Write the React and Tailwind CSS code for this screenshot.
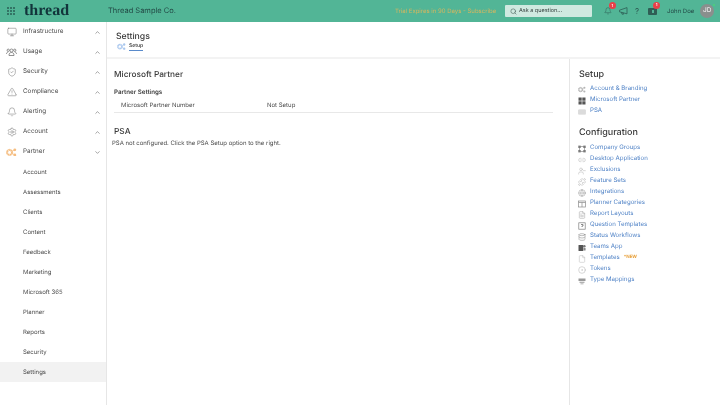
import React from "react";
import { Monitor, ShieldCheck, TriangleAlert, Bell, Settings, ChevronUp, ChevronDown, Search, Link2, UserMinus, Puzzle, Globe, FileText, File, Database, CircleDot } from "lucide-react";

function Cogs({ size = 10, className = "" }) {
  return (
    <svg width={size} height={size * 0.8} viewBox="0 0 20 16" className={className} fill="currentColor">
      <circle cx="6.5" cy="8" r="4.2" fill="none" stroke="currentColor" strokeWidth="3.2" strokeDasharray="2.4 0.8" />
      <circle cx="6.5" cy="8" r="5.6" fill="none" stroke="currentColor" strokeWidth="1.2" />
      <circle cx="16" cy="3.4" r="2.6" />
      <circle cx="16" cy="12.6" r="2.6" />
      <path d="M10 6.5 16 3.4M10 9.5l6 3.2" stroke="currentColor" strokeWidth="1.3" />
    </svg>
  );
}
function UsageIcon({ className = "" }) {
  return (
    <svg width="11" height="10" viewBox="0 0 22 20" fill="none" stroke="currentColor" strokeWidth="1.5" className={className}>
      <circle cx="11" cy="7" r="3" />
      <path d="M6 16c0-3 2-5 5-5s5 2 5 5v1H6z" />
      <circle cx="4.5" cy="6.5" r="2.3" />
      <circle cx="17.5" cy="6.5" r="2.3" />
      <path d="M1 14c0-2.400 1.500-4 3.500-4M21 14c0-2.400-1.500-4-3.500-4" />
    </svg>
  );
}
const Win = ({ className = "" }) => (
  <svg width="8" height="8" viewBox="0 0 8 8" fill="currentColor" className={className}>
    <rect x="0.500" y="0.500" width="3.200" height="3.200" />
    <rect x="4.300" y="0.500" width="3.200" height="3.200" />
    <rect x="0.500" y="4.300" width="3.200" height="3.200" />
    <rect x="4.300" y="4.300" width="3.200" height="3.200" />
  </svg>
);
const Card = ({ className = "" }) => (
  <svg width="8" height="8" viewBox="0 0 8 8" fill="currentColor" className={className}>
    <rect x="0.300" y="1.500" width="7.400" height="5" rx="0.500" opacity="0.55" />
    <path d="M1 3h6M1 5h6" stroke="#fff" strokeWidth="0.500" />
  </svg>
);
const Groups = ({ className = "" }) => (
  <svg width="8" height="8" viewBox="0 0 8 8" fill="none" stroke="currentColor" strokeWidth="0.600" className={className}>
    <rect x="1.400" y="1.400" width="5.200" height="5.200" />
    <g fill="currentColor" stroke="none">
      <rect x="0.300" y="0.600" width="2.400" height="2.400" />
      <rect x="5.300" y="0.600" width="2.400" height="2.400" />
      <rect x="0.300" y="5" width="2.400" height="2.400" />
      <rect x="5.300" y="5" width="2.400" height="2.400" />
    </g>
  </svg>
);
const Planner = ({ className = "" }) => (
  <svg width="8" height="8" viewBox="0 0 8 8" fill="none" stroke="currentColor" strokeWidth="0.700" className={className}>
    <rect x="0.600" y="1" width="6.800" height="6" />
    <path d="M0.600 2.500h6.800M4 2.500V7" />
  </svg>
);
const Question = ({ className = "" }) => (
  <svg width="8" height="8" viewBox="0 0 8 8" fill="none" stroke="currentColor" strokeWidth="0.700" className={className}>
    <rect x="0.800" y="0.800" width="6.400" height="6.400" />
    <path d="M3 2.500h2v1.500H4v1" strokeWidth="0.900" />
  </svg>
);
const Teams = ({ className = "" }) => (
  <svg width="8" height="8" viewBox="0 0 8 8" fill="currentColor" className={className}>
    <rect x="0.500" y="1" width="4.800" height="6" rx="0.500" />
    <circle cx="6.400" cy="2.300" r="1.200" opacity="0.800" />
    <rect x="5.600" y="4" width="2" height="2.600" rx="0.600" opacity="0.700" />
  </svg>
);
const Stack = ({ className = "" }) => (
  <svg width="8" height="8" viewBox="0 0 8 8" fill="currentColor" className={className}>
    <path d="M0.500 1.500h7v2.500h-7zM1.500 4.800h5v1h-5zM2.500 6.400h3v0.900h-3z" />
  </svg>
);

const nav = [
  ["Infrastructure", Monitor],
  ["Usage", UsageIcon],
  ["Security", ShieldCheck],
  ["Compliance", TriangleAlert],
  ["Alerting", Bell],
  ["Account", Settings],
];
const subs = ["Account", "Assessments", "Clients", "Content", "Feedback", "Marketing", "Microsoft 365", "Planner", "Reports", "Security", "Settings"];
const S = (I) => (p) => <I size={8} strokeWidth={1.5} {...p} />;
const setup = [
  ["Account & Branding", (p) => <Cogs size={9} {...p} />, "text-[#b5b5b5]"],
  ["Microsoft Partner", Win, "text-[#555555]"],
  ["PSA", Card, "text-[#a8a8a8]"],
];
const config = [
  ["Company Groups", Groups, "text-[#7a7a7a]"],
  ["Desktop Application", S(Link2), "text-[#b0b0b0]"],
  ["Exclusions", S(UserMinus), "text-[#b0b0b0]"],
  ["Feature Sets", S(Puzzle), "text-[#a8a8a8]"],
  ["Integrations", S(Globe), "text-[#999999]"],
  ["Planner Categories", Planner, "text-[#8a8a8a]"],
  ["Report Layouts", S(FileText), "text-[#a0a0a0]"],
  ["Question Templates", Question, "text-[#7f7f7f]"],
  ["Status Workflows", S(Database), "text-[#808080]"],
  ["Teams App", Teams, "text-[#555555]"],
  ["Templates", S(File), "text-[#b8b8b8]"],
  ["Tokens", S(CircleDot), "text-[#b0b0b0]"],
  ["Type Mappings", Stack, "text-[#999999]"],
];

function LinkRow({ label, Icon, color, extra }) {
  return (
    <div className="flex h-[11px] items-center">
      <span className={`ml-[8px] mr-[4px] flex w-[8px] shrink-0 justify-center ${color}`}><Icon /></span>
      <span className="text-[6.1px] leading-none text-[#4f82c6]">{label}</span>
      {extra}
    </div>
  );
}

function Badge({ className }) {
  return <span className={`absolute flex h-[7px] w-[7px] items-center justify-center rounded-full bg-[#ea3f48] text-[4px] font-semibold leading-none text-white ${className}`}>1</span>;
}

export default function App() {
  return (
    <div className="flex h-[405px] w-[720px] flex-col overflow-hidden bg-white text-[#4a4a4a] antialiased blur-[0.35px] [text-rendering:geometricPrecision]" style={{ fontFamily: "Inter, 'Noto Sans', sans-serif" }}>
      <header className="flex h-[22px] shrink-0 items-center bg-[#52b596]">
        <div className="ml-[7px] grid h-[8px] w-[8px] grid-cols-3 gap-[1px]">
          {Array.from({ length: 9 }).map((_, i) => (
            <span key={i} className="h-[2px] w-[2px] rounded-full bg-[#2a5f55]" />
          ))}
        </div>
        <span className="ml-[9px] w-[84px] text-[16px] font-bold leading-none text-[#12343b]" style={{ fontFamily: "'Liberation Serif', serif" }}>thread</span>
        <span className="text-[7.5px] text-[#234a46]">Thread Sample Co.</span>
        <span className="ml-[219px] w-[110px] text-[6px] text-[#d8b65e]">Trial Expires in 90 Days - Subscribe</span>
        <div className="flex h-[12px] w-[87px] items-center rounded-[1px] bg-[#cfe9e0] pl-[5px]">
          <Search size={7} className="text-[#47615a]" />
          <span className="ml-[2px] text-[5.5px] text-[#333f3c]">Ask a question...</span>
        </div>
        <div className="relative ml-[12px] text-[#2f5e55]">
          <Bell size={8} strokeWidth={1.5} />
          <Badge className="left-[5px] top-[-5px]" />
        </div>
        <svg width="9" height="8" viewBox="0 0 9 8" fill="none" stroke="#2f5e55" strokeWidth="0.800" className="ml-[7px]">
          <path d="M0.500 3.200 8 0.600v6.200L0.500 4.800zM2.500 5.200l0.500 2h1.500l-0.300-1.400" />
        </svg>
        <span className="ml-[7px] text-[8px] leading-none text-[#2f5e55]">?</span>
        <div className="relative ml-[9px] flex h-[7px] w-[9px] items-center justify-center rounded-[1px] bg-[#2f5e55]">
          <span className="h-[3px] w-[2px] bg-[#52b596]" />
          <Badge className="left-[5px] top-[-6px]" />
        </div>
        <span className="ml-[10px] text-[6px] text-[#234a46]">John Doe</span>
        <div className="relative ml-[6px] flex h-[14px] w-[14px] items-center justify-center rounded-full bg-[#8a8f8d] text-[6.5px] font-medium text-[#e8e8e8]">
          JD
          <span className="absolute right-[-1px] top-[0px] h-[2px] w-[2px] rounded-full bg-[#4fd07a]" />
        </div>
      </header>
      <div className="flex min-h-0 flex-1">
        <aside className="w-[107px] shrink-0 border-r border-[#e6e6e6]">
          {nav.map(([label, Icon]) => (
            <div key={label} className="flex h-[20px] items-center">
              <span className="ml-[6px] flex w-[11px] justify-center text-[#6f6f6f]"><Icon size={10} strokeWidth={1.2} /></span>
              <span className="ml-[6px] flex-1 text-[6.3px] text-[#4a4a4a]">{label}</span>
              <ChevronUp size={7} className="mr-[5px] text-[#666666]" />
            </div>
          ))}
          <div className="flex h-[20px] items-center">
            <span className="ml-[6px] flex w-[11px] justify-center text-[#f5bd80]"><Cogs size={11} /></span>
            <span className="ml-[6px] flex-1 text-[6.3px] text-[#4a4a4a]">Partner</span>
            <ChevronDown size={7} className="mr-[5px] text-[#666666]" />
          </div>
          {subs.map((s) => (
            <div key={s} className={`flex h-[20px] items-center pl-[23px] text-[6px] text-[#4a4a4a] ${s === "Settings" ? "bg-[#f2f2f2]" : ""}`}>{s}</div>
          ))}
        </aside>
        <div className="flex min-w-0 flex-1 flex-col">
          <div className="h-[37px] shrink-0 border-b-2 border-[#f3f3f3] pl-[9px] pt-[9px]">
            <div className="text-[8.7px] font-medium leading-[12px] text-[#3a3a3a]">Settings</div>
            <div className="flex items-center">
              <Cogs size={9} className="ml-[1px] text-[#a9c7ee]" />
              <span className="ml-[3px] border-b border-[#5a8bcb] pb-[1px] text-[5px] font-semibold leading-[6px] text-[#444444]">Setup</span>
            </div>
          </div>
          <div className="flex min-h-0 flex-1">
            <main className="w-[463px] shrink-0 border-r border-[#e6e6e6] pl-[5px] pt-[10px]">
              <div className="pl-[2px] text-[8.3px] font-medium leading-[12px] text-[#3a3a3a]">Microsoft Partner</div>
              <div className="mt-[7px] pl-[2px] text-[6.2px] font-semibold leading-[9px] text-[#3f3f3f]">Partner Settings</div>
              <div className="ml-[2px] mt-[4px] flex h-[12px] w-[439px] items-center border-b border-[#e8e8e8] pb-[2px] pl-[7px] text-[6px] text-[#4a4a4a]">
                <span className="w-[146px]">Microsoft Partner Number</span>
                <span>Not Setup</span>
              </div>
              <div className="mt-[13px] pl-[2px] text-[8.3px] font-medium leading-[12px] text-[#3a3a3a]">PSA</div>
              <div className="mt-[1px] text-[6px] leading-[9px] text-[#4a4a4a]">PSA not configured. Click the PSA Setup option to the right.</div>
            </main>
            <section className="flex-1 pt-[10px]">
              <div className="pl-[9px] text-[9px] font-medium leading-[12px] text-[#3a3a3a]">Setup</div>
              <div className="mt-[3px]">
                {setup.map(([l, I, c]) => <LinkRow key={l} label={l} Icon={I} color={c} />)}
              </div>
              <div className="mt-[10px] pl-[9px] text-[9px] font-medium leading-[12px] text-[#3a3a3a]">Configuration</div>
              <div className="mt-[4px]">
                {config.map(([l, I, c]) => (
                  <LinkRow key={l} label={l} Icon={I} color={c} extra={l === "Templates" ? <span className="ml-[4px] text-[4.5px] font-bold text-[#e8a13c]">*NEW</span> : null} />
                ))}
              </div>
            </section>
          </div>
        </div>
      </div>
    </div>
  );
}
